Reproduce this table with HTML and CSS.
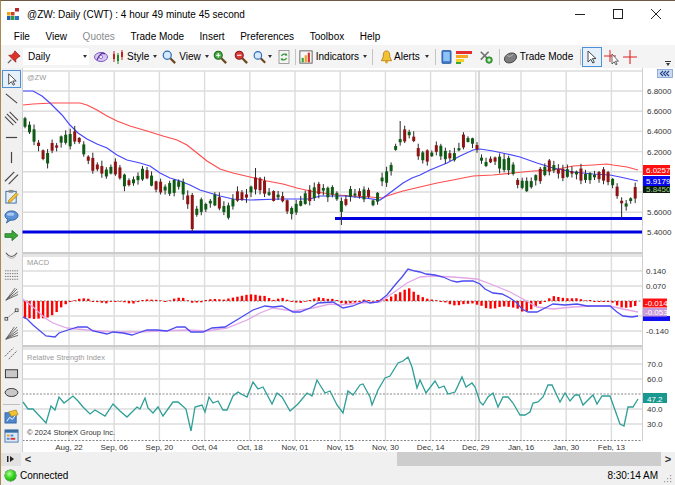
FILE: index.html
```html
<!DOCTYPE html>
<html>
<head>
<meta charset="utf-8">
<title>@ZW: Daily (CWT)</title>
<link rel="stylesheet" href="styles.css">
</head>
<body>
<div class="win">
  <div class="titlebar">
    <svg class="appicon" width="12" height="12" viewBox="0 0 12 12">
      <rect x="8" y="0" width="4" height="3.5" fill="#b8262b"/>
      <rect x="0" y="4" width="3.5" height="3.5" fill="#e9a40f"/>
      <rect x="4" y="4" width="3.5" height="3.5" fill="#d23a2a"/>
      <rect x="0" y="8" width="3.5" height="4" fill="#1f5fb8"/>
      <rect x="4" y="8" width="3.5" height="4" fill="#2e9a3a"/>
      <rect x="8" y="8" width="4" height="4" fill="#2a6fc4"/>
    </svg>
    <span class="title">@ZW: Daily (CWT) : 4 hour 49 minute 45 second</span>
    <span class="grow"></span>
    <span class="wbtn"><svg width="12" height="12" viewBox="0 0 12 12"><line x1="1" y1="6.5" x2="11" y2="6.5" stroke="#222" stroke-width="1"/></svg></span>
    <span class="wbtn"><svg width="12" height="12" viewBox="0 0 12 12"><rect x="1.5" y="1.5" width="9" height="9" fill="none" stroke="#222" stroke-width="1"/></svg></span>
    <span class="wbtn"><svg width="12" height="12" viewBox="0 0 12 12"><path d="M1 1 L11 11 M11 1 L1 11" stroke="#222" stroke-width="1"/></svg></span>
  </div>

  <div class="menubar">
    <span class="mi">File</span>
    <span class="mi">View</span>
    <span class="mi dis">Quotes</span>
    <span class="mi">Trade Mode</span>
    <span class="mi">Insert</span>
    <span class="mi">Preferences</span>
    <span class="mi">Toolbox</span>
    <span class="mi">Help</span>
  </div>

  <div class="toolbar">
    <svg class="ic w14" viewBox="0 0 16 16"><path d="M9 1 L15 7 L13 8 L10 11 L10 14 L2 6 L5 6 L8 3 Z" fill="#e0302a" stroke="#8a1410" stroke-width="0.8"/><line x1="5" y1="11" x2="1" y2="15" stroke="#555" stroke-width="1.4"/></svg>
    <div class="combo ml2"><span>Daily</span><i class="caret"></i></div>
    <svg class="ic w16 ml4" viewBox="0 0 16 16"><ellipse cx="8" cy="8" rx="6.5" ry="4.5" fill="#d9c8f0" stroke="#7b55c0" stroke-width="1"/><path d="M4 11 Q8 2 12 5" fill="none" stroke="#5a36a8" stroke-width="1.3"/><circle cx="8" cy="8" r="1.6" fill="#fff" stroke="#7b55c0" stroke-width="0.8"/></svg>
    <svg class="ic w12 ml3" viewBox="0 0 12 16"><line x1="2" y1="2" x2="2" y2="13" stroke="#c02020"/><rect x="1" y="5" width="2" height="5" fill="#c02020"/><line x1="6" y1="4" x2="6" y2="15" stroke="#1d8a1d"/><rect x="5" y="6" width="2" height="6" fill="#1d8a1d"/><line x1="10" y1="1" x2="10" y2="11" stroke="#c02020"/><rect x="9" y="3" width="2" height="5" fill="#c02020"/></svg>
    <span class="tbt ml3">Style</span><i class="caret ml4"></i>
    <svg class="ic w14 ml5" viewBox="0 0 16 16"><line x1="9.5" y1="9.5" x2="15" y2="15" stroke="#6b4a1e" stroke-width="2.6"/><circle cx="6" cy="6" r="4.6" fill="#d6e8fb" stroke="#2e6ab5" stroke-width="1.4"/></svg>
    <span class="tbt ml3">View</span><i class="caret ml4"></i>
    <svg class="ic w14 ml4" viewBox="0 0 16 16"><line x1="9.5" y1="9.5" x2="15" y2="15" stroke="#6b4a1e" stroke-width="2.6"/><circle cx="6" cy="6" r="4.6" fill="#48a844" stroke="#1d6a1d" stroke-width="1.2"/><path d="M3.5 6 H8.5 M6 3.5 V8.5" stroke="#fff" stroke-width="1.2"/></svg>
    <svg class="ic w14 ml7" viewBox="0 0 16 16"><line x1="9.5" y1="9.5" x2="15" y2="15" stroke="#6b4a1e" stroke-width="2.6"/><circle cx="6" cy="6" r="4.6" fill="#d83a3a" stroke="#8a1a1a" stroke-width="1.2"/><path d="M3.5 6 H8.5" stroke="#fff" stroke-width="1.2"/></svg>
    <svg class="ic w13 ml5" viewBox="0 0 16 16"><line x1="9.5" y1="9.5" x2="15" y2="15" stroke="#6b4a1e" stroke-width="2.6"/><circle cx="6" cy="6" r="4.6" fill="#d6e8fb" stroke="#2e6ab5" stroke-width="1.4"/></svg>
    <i class="caret ml2"></i>
    <svg class="ic w12 ml6" viewBox="0 0 12 16"><rect x="1" y="1.5" width="10" height="13" fill="#f4f4f4" stroke="#8a8a8a" stroke-width="0.8"/><path d="M3.5 7 A3 3 0 0 1 8.5 6 M8.5 9 A3 3 0 0 1 3.5 10" fill="none" stroke="#2f9a2f" stroke-width="1.2"/><path d="M8 4 L9.5 6.5 L7 6.5 Z M4 12 L2.5 9.5 L5 9.5 Z" fill="#2f9a2f"/></svg>
    <span class="sep ml5"></span>
    <svg class="ic w14 ml3" viewBox="0 0 16 16"><rect x="1" y="1" width="14" height="14" fill="#f8f8f8" stroke="#555" stroke-width="1"/><rect x="3" y="9" width="2.5" height="5" fill="#3aa53a"/><rect x="6.5" y="6" width="2.5" height="8" fill="#f0a020"/><rect x="10" y="3" width="2.5" height="11" fill="#d83030"/></svg>
    <span class="tbt ml3">Indicators</span><i class="caret ml4"></i>
    <span class="sep ml5"></span>
    <svg class="ic w13 ml7" viewBox="0 0 14 16"><path d="M7 1.5 C3.5 1.5 3.5 5 3.5 8 L1.5 12 H12.5 L10.5 8 C10.5 5 10.5 1.5 7 1.5 Z" fill="#f3c233" stroke="#b07a10" stroke-width="0.9"/><circle cx="7" cy="13.5" r="1.6" fill="#e0a020"/></svg>
    <span class="tbt ml1">Alerts</span><i class="caret ml5"></i>
    <span class="sep ml6"></span>
    <svg class="ic w11 ml5" viewBox="0 0 12 16"><rect x="1" y="1" width="10" height="14" rx="1" fill="#3d7bd0" stroke="#234f90" stroke-width="0.8"/><rect x="2.5" y="2.5" width="7" height="10" fill="#8fc3f5"/></svg>
    <svg class="ic w16 ml4" viewBox="0 0 16 16"><rect x="0" y="2" width="16" height="3" fill="#e23030"/><rect x="0" y="6" width="12" height="3" fill="#f5a623"/><rect x="0" y="10" width="8" height="3" fill="#f3d323"/><rect x="0" y="13" width="5" height="2" fill="#3aa53a"/></svg>
    <svg class="ic w14 ml7" viewBox="0 0 16 16"><path d="M2 2 L11 11 M11 2 L2 11" stroke="#777" stroke-width="2"/><circle cx="11.5" cy="11.5" r="3.8" fill="#3aa53a" stroke="#1d6a1d" stroke-width="0.6"/><path d="M9.5 11.5 H13.5 M11.5 9.5 V13.5" stroke="#fff" stroke-width="1.2"/></svg>
    <span class="sep ml6"></span>
    <svg class="ic w15 ml3" viewBox="0 0 16 16"><ellipse cx="8" cy="9" rx="6.8" ry="5" fill="#7d7d7d" stroke="#333" stroke-width="0.8" transform="rotate(-25 8 9)"/><path d="M4 6 Q7 9 11 5" fill="none" stroke="#ccc" stroke-width="0.8"/></svg>
    <span class="tbt ml2">Trade Mode</span>
    <span class="sep ml7"></span>
    <span class="selbox ml1"><svg width="12" height="14" viewBox="0 0 12 14"><path d="M2 1 L2 12 L4.8 9.3 L6.8 13 L8.3 12.3 L6.4 8.6 L10 8.6 Z" fill="#fff" stroke="#333" stroke-width="0.9"/></svg></span>
    <svg class="ic w16 ml2" viewBox="0 0 16 16"><path d="M6 1 V13 M0 7 H12" stroke="#e02020" stroke-width="1"/><path d="M8 5 L8 15 L10.2 12.8 L11.8 15.8 L13 15.2 L11.5 12.2 L14.4 12.2 Z" fill="#fff" stroke="#444" stroke-width="0.8"/></svg>
    <svg class="ic w16 ml2" viewBox="0 0 16 16"><path d="M8 1 V15 M1 8 H15" stroke="#e02020" stroke-width="1.1"/></svg>
    <span class="grow"></span>
    <span class="more"><i class="bar"></i><i class="caret"></i></span>
  </div>

  <div class="main">
    <div class="lefttools">
      <span class="lt selbox2"><svg viewBox="0 0 16 16"><path d="M5 2 L5 13 L7.8 10.3 L9.8 14 L11.3 13.3 L9.4 9.6 L13 9.6 Z" fill="#fff" stroke="#333" stroke-width="0.9"/></svg></span>
      <span class="lt"><svg viewBox="0 0 16 16"><line x1="2" y1="3" x2="14" y2="13" stroke="#444" stroke-width="1.2"/></svg></span>
      <span class="lt"><svg viewBox="0 0 16 16"><path d="M1 6 L10 15 M3 3 L13 13 M6 1 L15 10" stroke="#444" stroke-width="1.1"/></svg></span>
      <span class="lt"><svg viewBox="0 0 16 16"><line x1="2" y1="8" x2="14" y2="8" stroke="#444" stroke-width="1.3"/></svg></span>
      <span class="lt"><svg viewBox="0 0 16 16"><line x1="8" y1="2" x2="8" y2="14" stroke="#444" stroke-width="1.3"/></svg></span>
      <span class="lt"><svg viewBox="0 0 16 16"><path d="M1 12 L11 2 M5 15 L15 5" stroke="#444" stroke-width="1.2"/></svg></span>
      <span class="lt"><svg viewBox="0 0 16 16"><rect x="2" y="2.5" width="11" height="12.5" fill="#e4eefa" stroke="#3a6ea5" stroke-width="1"/><rect x="5" y="1" width="5" height="3" fill="#8a8a8a"/><path d="M5 12 L13 4 L15 6 L7 14 L4.5 14.5 Z" fill="#f2c230" stroke="#8a6a10" stroke-width="0.6"/></svg></span>
      <span class="lt"><svg viewBox="0 0 16 16"><ellipse cx="8" cy="7" rx="7" ry="5" fill="#5d92d6" stroke="#2a5a9a" stroke-width="0.9"/><path d="M4 11 L2.5 15 L7.5 11.5" fill="#5d92d6" stroke="#2a5a9a" stroke-width="0.8"/><ellipse cx="7" cy="5.5" rx="4" ry="1.8" fill="#a9c9f0"/></svg></span>
      <span class="lt"><svg viewBox="0 0 16 16"><path d="M1 6 H8.5 V2.5 L15 8 L8.5 13.5 V10 H1 Z" fill="#3aa63a" stroke="#1f6f1f" stroke-width="0.8"/></svg></span>
      <span class="lt"><svg viewBox="0 0 16 16"><path d="M2 5 Q8 13 14 5" fill="none" stroke="#555" stroke-width="1.1"/><path d="M3 8 Q8 14 13 8" fill="none" stroke="#999" stroke-width="0.8"/></svg></span>
      <span class="lt"><svg viewBox="0 0 16 16"><path d="M1 3 H15 M1 6 H15 M1 9 H15 M1 12 H15" stroke="#555" stroke-width="0.8" stroke-dasharray="1.5 1"/></svg></span>
      <span class="lt"><svg viewBox="0 0 16 16"><path d="M2 14 L14 2 M2 14 L15 5 M2 14 L15 8 M2 14 L12 1" stroke="#555" stroke-width="0.9"/></svg></span>
      <span class="lt"><svg viewBox="0 0 16 16"><line x1="3" y1="12" x2="13" y2="4" stroke="#555" stroke-width="0.9" stroke-dasharray="1.5 1"/><rect x="1" y="11" width="3" height="3" fill="none" stroke="#333" stroke-width="0.8"/><rect x="12" y="2" width="3" height="3" fill="none" stroke="#333" stroke-width="0.8"/></svg></span>
      <span class="lt"><svg viewBox="0 0 16 16"><path d="M2 14 L14 1 M2 14 L15 4 M2 14 L15 7 M2 14 L15 10 M2 14 L11 1" stroke="#555" stroke-width="0.9"/></svg></span>
      <span class="lt"><svg viewBox="0 0 16 16"><path d="M1 11 L10 2 M5 14 L14 5" stroke="#555" stroke-width="1" stroke-dasharray="2 1"/></svg></span>
      <span class="lt"><svg viewBox="0 0 16 16"><rect x="1.5" y="4" width="13" height="8.5" fill="#c8c8c8" stroke="#333" stroke-width="1"/></svg></span>
      <span class="lt"><svg viewBox="0 0 16 16"><ellipse cx="8" cy="8" rx="6.8" ry="4.3" fill="#c8c8c8" stroke="#333" stroke-width="1"/></svg></span>
      <span class="ltsep"></span>
      <span class="lt"><svg viewBox="0 0 16 16"><rect x="1" y="4" width="12" height="11" fill="#4f86d0" stroke="#2a5a9a" stroke-width="0.8"/><path d="M5 3 L13 1 L15 6 L8 8 Z" fill="#f2c230" stroke="#9a7a10" stroke-width="0.6"/><path d="M3 13 L6 9 L9 11 L12 7" fill="none" stroke="#fff" stroke-width="1"/></svg></span>
      <span class="lt"><svg viewBox="0 0 16 16"><rect x="1" y="2" width="14" height="13" fill="#dce9f8" stroke="#3a6ea5" stroke-width="0.9"/><rect x="1" y="2" width="14" height="3" fill="#3a6ea5"/><rect x="3" y="7" width="3" height="2" fill="#e8a020"/><rect x="7" y="7" width="3" height="2" fill="#4f86d0"/><rect x="3" y="10.5" width="3" height="2" fill="#4f86d0"/><rect x="7" y="10.5" width="5" height="2" fill="#d83030"/></svg></span>
    </div>
    <svg id="chart" class="chart" width="653" height="384" viewBox="22 68 653 384"></svg>
  </div>

  <div class="scrollrow">
    <span class="sbtn"><svg width="10" height="8" viewBox="0 0 10 8"><rect x="1" y="1" width="1.5" height="6" fill="#222"/><path d="M4 1 L8 4 L4 7 Z" fill="#222"/></svg></span>
    <span class="arrow">&lt;</span>
    <span class="track"><span class="thumb"></span></span>
    <span class="arrow">&gt;</span>
  </div>

  <div class="statusbar">
    <span class="led"></span>
    <span class="conn">Connected</span>
    <span class="grow"></span>
    <span class="clock">8:30:14 AM</span>
    <svg class="grip" width="8" height="8" viewBox="0 0 8 8"><rect x="6" y="0" width="1.2" height="1.2" fill="#999"/><rect x="3" y="3" width="1.2" height="1.2" fill="#999"/><rect x="6" y="3" width="1.2" height="1.2" fill="#999"/><rect x="0" y="6" width="1.2" height="1.2" fill="#999"/><rect x="3" y="6" width="1.2" height="1.2" fill="#999"/><rect x="6" y="6" width="1.2" height="1.2" fill="#999"/></svg>
  </div>
</div>
<script src="chart.js"></script>
</body>
</html>
```

FILE: styles.css
```css
html, body {
  margin: 0;
  padding: 0;
  background: #ffffff;
}
body {
  width: 675px;
  height: 485px;
  overflow: hidden;
  font-family: "Liberation Sans", Arial, sans-serif;
  font-size: 10px;
  color: #000;
}
.win {
  width: 675px;
  height: 485px;
  box-sizing: border-box;
  border-top: 1px solid #6e5c48;
  border-left: 1px solid #a88a52;
  display: flex;
  flex-direction: column;
  background: #fff;
}
.grow { flex: 1; }

/* title bar */
.titlebar {
  height: 26px;
  display: flex;
  align-items: center;
  background: #fff;
}
.appicon { margin-left: 6px; }
.title { margin-left: 8px; font-size: 10px; color: #000; }
.wbtn {
  width: 38px;
  height: 26px;
  display: flex;
  align-items: center;
  justify-content: center;
}

/* menu */
.menubar {
  height: 18px;
  display: flex;
  align-items: center;
  padding-left: 5px;
  background: #fff;
}
.mi { padding: 0 7.8px; }
.mi.dis { color: #8c8c8c; }

/* toolbar */
.toolbar {
  height: 23px;
  display: flex;
  align-items: center;
  padding-left: 6px;
  background: #f4f4f4;
}
.ic { height: 16px; flex: none; }
.w11 { width: 11px; }
.w12 { width: 12px; }
.w13 { width: 13px; }
.w14 { width: 14px; }
.w15 { width: 15px; }
.w16 { width: 16px; }
.ml1 { margin-left: 1px; }
.ml2 { margin-left: 2px; }
.ml3 { margin-left: 3px; }
.ml4 { margin-left: 4px; }
.ml5 { margin-left: 5px; }
.ml6 { margin-left: 6px; }
.ml7 { margin-left: 7px; }
.combo {
  width: 66px;
  height: 17px;
  box-sizing: border-box;
  background: #fff;
  display: flex;
  align-items: center;
  padding-left: 5px;
  padding-right: 2px;
}
.combo span { flex: 1; }
.caret {
  display: inline-block;
  width: 0;
  height: 0;
  border-left: 2.5px solid transparent;
  border-right: 2.5px solid transparent;
  border-top: 3px solid #333;
  flex: none;
}
.tbt { white-space: nowrap; }
.sep {
  width: 1px;
  height: 16px;
  background: #c4c4c4;
  flex: none;
}
.selbox {
  width: 20px;
  height: 20px;
  box-sizing: border-box;
  border: 1px solid #4f8fd6;
  background: #e6f0fb;
  display: flex;
  align-items: center;
  justify-content: center;
  flex: none;
}
.more {
  width: 9px;
  margin-right: 3px;
  align-self: flex-end;
  margin-bottom: 2px;
  display: flex;
  flex-direction: column;
  align-items: center;
  gap: 1px;
}
.more .bar { display: block; width: 6px; height: 1px; background: #333; }

/* main area */
.main {
  height: 384px;
  display: flex;
}
.lefttools {
  width: 21px;
  background: #f0f0f0;
  display: flex;
  flex-direction: column;
  padding-top: 1px;
  box-sizing: border-box;
}
.lt {
  height: 19.6px;
  display: flex;
  align-items: center;
  justify-content: center;
  flex: none;
}
.lt svg { width: 15px; height: 15px; }
.selbox2 {
  margin: 1px 1px;
  height: 18px;
  box-sizing: border-box;
  border: 1px solid #4f8fd6;
  background: #e6f0fb;
}
.ltsep {
  height: 1px;
  margin: 1.5px 2px;
  background: #c0c0c0;
  flex: none;
}
.chart { display: block; flex: none; }

/* scrollbar row */
.scrollrow {
  height: 14px;
  display: flex;
  align-items: center;
  background: #f0f0f0;
}
.sbtn {
  width: 20px;
  height: 13px;
  background: #e2e2e2;
  display: flex;
  align-items: center;
  justify-content: center;
}
.arrow {
  width: 14px;
  text-align: center;
  font-size: 11px;
  font-weight: bold;
  color: #333;
}
.track {
  flex: 1;
  height: 14px;
  display: flex;
  justify-content: flex-end;
}
.thumb {
  width: 264px;
  height: 14px;
  background: #cdcdcd;
}

/* status bar */
.statusbar {
  height: 19px;
  display: flex;
  align-items: center;
  background: #f0f0f0;
}
.led {
  width: 11px;
  height: 11px;
  margin-left: 4px;
  border-radius: 50%;
  background: radial-gradient(circle at 40% 35%, #b6ff9a 0%, #34d41e 45%, #138a0a 100%);
  box-shadow: 0 0 0 0.5px #0b5a06;
}
.conn { margin-left: 4px; }
.clock { margin-right: 6px; }
.grip { margin-right: 3px; align-self: flex-end; margin-bottom: 2px; }

/* chart svg */
.bg { fill: #ffffff; }
.grid { stroke: #dcdcdc; stroke-width: 1.4; fill: none; }
.grid2 { stroke: #c8c8c8; stroke-width: 1.4; fill: none; }
.dash { stroke: #7a7a7a; stroke-width: 0.9; stroke-dasharray: 2 1.5; fill: none; }
.psep { fill: #cbcbcb; }
.edge { stroke: #cfcfcf; stroke-width: 1; fill: none; }
.ax { font-family: "Liberation Sans", Arial, sans-serif; font-size: 8px; fill: #333; }
.axw { font-family: "Liberation Sans", Arial, sans-serif; font-size: 8px; fill: #fff; }
.axg { font-family: "Liberation Sans", Arial, sans-serif; font-size: 8px; fill: #9fd08f; }
.plabel { font-family: "Liberation Sans", Arial, sans-serif; font-size: 7.5px; fill: #9a9a9a; }
.copy { font-family: "Liberation Sans", Arial, sans-serif; font-size: 7.5px; fill: #333; }
.ma1 { stroke: #4646ff; stroke-width: 1.2; fill: none; }
.ma2 { stroke: #ff4c4c; stroke-width: 1.2; fill: none; }
.hline { stroke: #0000e0; stroke-width: 3; }
.wick { stroke: #2a2a2a; stroke-width: 1; }
.up { fill: #0f5a14; }
.dn { fill: #8e1414; }
.hist { fill: #ff0000; }
.macd { stroke: #4b4bf2; stroke-width: 1.3; fill: none; }
.sig { stroke: #e3a6e6; stroke-width: 1.3; fill: none; }
.rsi { stroke: #2e9f96; stroke-width: 1.3; fill: none; }
.navbtn { fill: #c9daf1; stroke: #7d9ccc; stroke-width: 0.8; }
.navchev { stroke: #27448a; stroke-width: 1.2; fill: none; }
```

FILE: chart.js
```js
(function () {
  var NS = 'http://www.w3.org/2000/svg';
  var svg = document.getElementById('chart');
  function el(t, a, p) {
    var e = document.createElementNS(NS, t);
    for (var k in a) e.setAttribute(k, a[k]);
    (p || svg).appendChild(e);
    return e;
  }
  function txt(x, y, s, cls, anchor) {
    var t = el('text', { x: x, y: y, 'class': cls });
    if (anchor) t.setAttribute('text-anchor', anchor);
    t.textContent = s;
    return t;
  }
  function interp(p, x) {
    if (x <= p[0][0]) return p[0][1];
    for (var i = 1; i < p.length; i++) {
      if (x <= p[i][0]) {
        var a = p[i - 1], b = p[i];
        return a[1] + (b[1] - a[1]) * (x - a[0]) / (b[0] - a[0]);
      }
    }
    return p[p.length - 1][1];
  }
  function poly(p, cls) {
    el('polyline', { points: p.map(function (q) { return q[0] + ',' + q[1]; }).join(' '), 'class': cls });
  }
  var seed = 9173;
  function rnd() { seed = (seed * 16807) % 2147483647; return (seed - 1) / 2147483646; }

  var L = 22.5, R = 642;

  el('rect', { x: 22, y: 68, width: 653, height: 384, 'class': 'bg' });

  // horizontal grids
  var hMain = [71, 91, 111.2, 131.4, 151.6, 171.8, 192, 212.2];
  var hMacd = [256, 271, 286, 316, 331];
  var hRsi = [349, 364, 379, 409, 424];
  hMain.concat(hMacd, hRsi).forEach(function (y) {
    el('line', { x1: L, y1: y, x2: R, y2: y, 'class': 'grid' });
  });
  // vertical grids
  var vx = [];
  for (var k = 0; k < 13; k++) vx.push(69 + k * 45.2);
  vx.forEach(function (x) {
    el('line', { x1: x, y1: 71, x2: x, y2: 441, 'class': 'grid' });
  });
  el('line', { x1: 479, y1: 71, x2: 479, y2: 441, 'class': 'grid2' });

  // dashed zero / mid lines
  el('line', { x1: L, y1: 301, x2: R, y2: 301, 'class': 'dash' });
  el('line', { x1: L, y1: 394, x2: R, y2: 394, 'class': 'dash' });
  el('line', { x1: L, y1: 440.5, x2: R, y2: 440.5, 'class': 'dash' });

  // panel separators
  el('rect', { x: 22, y: 252, width: 620, height: 2.5, 'class': 'psep' });
  el('rect', { x: 22, y: 345, width: 620, height: 2.5, 'class': 'psep' });

  // edges
  el('line', { x1: 22.5, y1: 68, x2: 22.5, y2: 452, 'class': 'edge' });
  el('line', { x1: 642.5, y1: 68, x2: 642.5, y2: 441, 'class': 'edge' });

  // panel labels
  txt(27, 80, '@ZW', 'plabel');
  txt(27, 265, 'MACD', 'plabel');
  txt(27, 360, 'Relative Strength Index', 'plabel');
  txt(27, 435, '\u00A9 2024 StoneX Group Inc.', 'copy');

  // support lines
  el('line', { x1: L, y1: 232, x2: R, y2: 232, 'class': 'hline' });
  el('line', { x1: 335, y1: 218.5, x2: R, y2: 218.5, 'class': 'hline' });

  // moving averages
  var red = [[23,105],[33,104],[53,103],[80,103],[87,105],[97,110],[107,116],[117,121],[130,126],[147,131],[163,136],[177,140],[187,145],[197,153],[207,161],[220,169],[233,173],[250,177],[267,181],[283,184],[297,188],[310,191],[323,193],[337,195],[353,196],[370,197],[383,198],[387,196],[403,191],[420,187],[437,183],[453,180],[473,176],[493,175],[513,173],[533,171],[553,170],[573,166],[593,165],[607,164],[613,165],[627,167],[638,170]];
  var blue = [[23,91],[33,91],[42,96],[50,103],[57,110],[62,115],[70,125],[78,133],[87,139],[97,144],[107,148],[117,155],[127,160],[140,163],[150,166],[160,173],[170,178],[180,181],[190,185],[200,190],[210,193],[220,196],[233,199],[250,200],[280,199],[310,199],[320,196],[345,196],[365,198],[380,200],[387,195],[395,189],[403,183],[412,178],[420,175],[430,170],[447,163],[460,156],[473,150],[480,149],[493,151],[507,154],[520,157],[537,163],[553,168],[573,172],[593,174],[610,175],[620,177],[638,181]];
  poly(red, 'ma2');
  poly(blue, 'ma1');

  // candles
  var mid = [[23,119],[27,126],[32,131],[37,142],[41,148],[46,164],[51,146],[55,149],[59,143],[64,135],[68,144],[72,137],[77,136],[82,145],[86,155],[91,163],[95,166],[100,168],[105,173],[109,173],[113,167],[118,169],[123,179],[127,183],[132,182],[136,180],[140,176],[144,173],[149,175],[154,186],[158,185],[163,189],[168,188],[172,189],[177,183],[182,186],[186,193],[191,213],[195,216],[200,204],[204,209],[208,204],[213,200],[217,200],[222,206],[227,214],[231,207],[236,196],[240,196],[245,196],[249,196],[253,183],[258,184],[263,185],[267,191],[271,196],[276,196],[280,196],[285,201],[289,210],[294,212],[298,205],[303,202],[307,196],[312,195],[317,190],[322,187],[326,194],[331,190],[336,193],[340,207],[345,205],[349,192],[354,195],[358,193],[363,195],[368,192],[372,202],[376,205],[381,180],[385,178],[390,175],[394,150],[398,145],[402,137],[407,134],[412,133],[417,150],[421,157],[426,155],[430,158],[435,148],[440,150],[444,155],[448,155],[453,157],[457,156],[461,142],[466,140],[470,140],[475,142],[480,155],[484,166],[488,162],[493,159],[497,160],[502,165],[507,164],[512,164],[516,182],[520,183],[525,186],[530,186],[534,180],[538,175],[543,175],[547,166],[552,166],[556,170],[561,173],[565,174],[570,172],[575,173],[579,173],[584,177],[588,177],[593,176],[597,176],[602,175],[606,175],[611,180],[615,185],[620,200],[624,205],[628,205],[633,195],[637,191]];
  var xs = [];
  for (var i = 0; i < 136; i++) xs.push(25 + i * 4.52);
  xs.forEach(function (x, i) {
    var m = interp(mid, x);
    var nxt = interp(mid, x + 4.5);
    var upP = nxt < m ? 0.7 : 0.35;
    var up = rnd() < upP;
    var h = 1 + rnd() * 5.5;
    var top = m - h, bot = m + h;
    var wt = top - (0.5 + rnd() * 5);
    var wb = bot + (0.5 + rnd() * 5);
    if (Math.abs(x - 191) < 2.3) { up = false; top = 195; bot = 229; wt = 193; wb = 232; }
    if (Math.abs(x - 343) < 2.3) { wb = 225; }
    if (Math.abs(x - 402) < 2.3) { wt = 121; }
    if (Math.abs(x - 255) < 2.3) { wt = 168; }
    if (Math.abs(x - 622) < 2.3) { wb = 218; up = false; }
    if (Math.abs(x - 628) < 2.3) { up = true; }
    el('line', { x1: x, y1: wt, x2: x, y2: wb, 'class': 'wick' });
    el('rect', { x: x - 1.5, y: top, width: 3, height: Math.max(1, bot - top), 'class': up ? 'up' : 'dn' });
  });

  // MACD
  var mBlue = [[23,317],[27,319],[33,325],[46,336],[55,337],[59,333],[68,330],[78,327],[87,327],[93,331],[107,334],[113,332],[123,333],[132,335],[138,333],[147,330],[157,330],[167,331],[177,327],[185,327],[191,332],[203,332],[212,328],[225,327],[240,318],[253,310],[265,306],[273,307],[282,306],[293,312],[300,312],[310,308],[318,303],[333,302],[343,308],[353,306],[365,301],[370,303],[378,302],[387,295],[395,285],[402,277],[408,269],[415,271],[420,272],[426,274],[435,275],[443,277],[452,281],[457,282],[463,281],[473,281],[480,284],[485,289],[493,293],[502,294],[510,298],[517,303],[522,309],[528,312],[537,312],[547,307],[553,304],[565,305],[577,304],[587,306],[600,306],[610,306],[617,312],[623,316],[632,317],[638,316]];
  var mSig = [[23,299],[33,307],[45,318],[53,323],[67,328],[87,330],[113,332],[137,332],[160,331],[187,330],[207,331],[227,328],[247,320],[260,313],[273,308],[293,311],[313,308],[330,304],[340,305],[360,303],[380,302],[393,293],[407,283],[420,277],[433,276],[453,277],[477,279],[493,285],[510,292],[523,299],[537,307],[553,309],[573,307],[593,306],[610,306],[623,309],[638,312]];
  xs.forEach(function (x) {
    var d = interp(mBlue, x) - interp(mSig, x);
    if (Math.abs(d) < 0.6) d = d < 0 ? -1 : 1;
    var y0 = d > 0 ? 301 : 301 + d;
    el('rect', { x: x - 1.2, y: y0, width: 2.4, height: Math.abs(d), 'class': 'hist' });
  });
  poly(mSig, 'sig');
  poly(mBlue, 'macd');

  // RSI
  var rsi = [[23,402],[28,409],[33,409],[46,423],[51,406],[55,410],[59,397],[64,403],[68,400],[73,396],[78,401],[83,407],[90,414],[95,410],[105,416],[113,404],[120,411],[127,417],[137,407],[140,409],[145,398],[148,408],[153,413],[158,407],[163,416],[173,402],[178,402],[186,409],[191,431],[195,407],[202,405],[205,412],[209,397],[213,403],[218,401],[223,410],[227,410],[233,396],[238,392],[243,395],[247,397],[253,382],[258,389],[263,387],[272,404],[277,393],[282,397],[290,411],[298,404],[307,393],[312,396],[317,380],[320,385],[325,393],[330,391],[337,405],[343,413],[348,391],[353,395],[360,385],[363,384],[370,397],[372,405],[378,390],[385,378],[390,376],[398,363],[403,361],[408,357],[412,367],[417,388],[420,380],[426,393],[435,381],[439,388],[444,386],[448,394],[455,392],[462,377],[466,387],[472,383],[475,387],[480,402],[483,405],[488,397],[493,393],[498,407],[503,397],[508,397],[513,403],[520,415],[525,415],[530,412],[533,403],[538,402],[543,397],[548,385],[552,385],[560,402],[565,393],[570,401],[575,395],[579,395],[583,405],[593,395],[597,404],[602,396],[610,396],[615,410],[620,424],[624,426],[628,407],[633,407],[638,399]];
  poly(rsi, 'rsi');

  // right axis labels (levels hidden under the value boxes are omitted)
  var AX = 647;
  [['6.8000',91],['6.6000',111.2],['6.4000',131.4],['6.2000',151.6],['5.6000',212.2],['5.4000',232.4]].forEach(function (a) {
    txt(AX, a[1] + 3, a[0], 'ax');
  });
  el('rect', { x: 643, y: 165, width: 27, height: 10, fill: '#ff1010' });
  txt(AX - 1, 173, '6.0257', 'axw');
  el('rect', { x: 643, y: 176, width: 27, height: 10, fill: '#0a0af0' });
  txt(AX - 1, 184, '5.9179', 'axw');
  el('rect', { x: 643, y: 186, width: 27, height: 7, fill: '#0c1a0c' });
  txt(AX - 1, 192, '5.8450', 'axg');

  [['0.140',271],['0.070',286],['-0.140',331]].forEach(function (a) {
    txt(AX - 1, a[1] + 3, a[0], 'ax');
  });
  el('rect', { x: 643, y: 316, width: 27, height: 5, fill: '#1010f0' });
  el('rect', { x: 643, y: 298.5, width: 24, height: 9, fill: '#ff1010' });
  txt(AX - 2, 306, '-0.014', 'axw');
  el('rect', { x: 643, y: 308, width: 24, height: 8.5, fill: '#c99bd9' });
  txt(AX - 2, 315, '-0.053', 'axw');

  [['70.0',364],['60.0',379],['40.0',409],['30.0',424]].forEach(function (a) {
    txt(AX, a[1] + 3, a[0], 'ax');
  });
  el('rect', { x: 643, y: 393, width: 24, height: 10, fill: '#19988f' });
  txt(AX, 401.5, '47.2', 'axw');

  // date labels
  var dates = ['Aug, 22','Sep, 06','Sep, 20','Oct, 04','Oct, 18','Nov, 01','Nov, 15','Nov, 30','Dec, 14','Dec, 29','Jan, 16','Jan, 30','Feb, 13'];
  dates.forEach(function (d, i) { txt(vx[i], 450, d, 'ax', 'middle'); });

  // collapse button top right
  el('rect', { x: 657.5, y: 69.5, width: 15, height: 8, 'class': 'navbtn' });
  el('path', { d: 'M663 71 L660.5 73.5 L663 76 M666 71 L663.5 73.5 L666 76 M669 71 L666.5 73.5 L669 76', 'class': 'navchev' });
})();
```
